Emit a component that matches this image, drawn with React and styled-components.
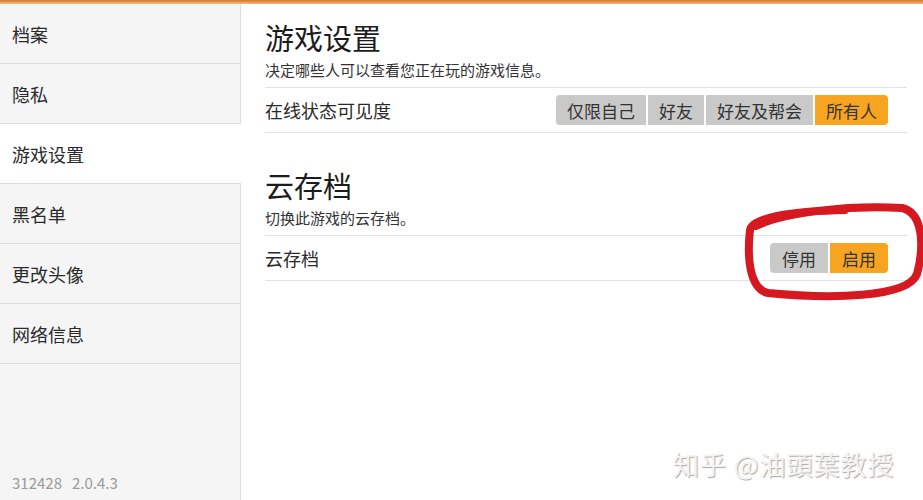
import React from "react";
import styled, { createGlobalStyle } from "styled-components";

const Global = createGlobalStyle`
  html, body { margin: 0; padding: 0; background: #fff; }
  body {
    font-family: "Noto Sans CJK SC", "Noto Sans", sans-serif;
    color: #222;
  }
  #root { height: 500px; }
`;

const Page = styled.div`
  position: relative;
  width: 923px;
  height: 500px;
  display: flex;
  flex-direction: column;
  overflow: hidden;
`;

const TopBar = styled.div`
  height: 4px;
  flex: none;
  background: linear-gradient(#d47a30 0, #e6964d 2px, #f3bf86 4px);
`;

const Body = styled.div`
  flex: 1;
  display: flex;
  min-height: 0;
`;

const Sidebar = styled.nav`
  width: 240px;
  flex: none;
  background: #f5f5f5;
  border-right: 1px solid #dedede;
  display: flex;
  flex-direction: column;
`;

const NavItem = styled.div`
  height: 59px;
  display: flex;
  align-items: center;
  padding-left: 12px;
  font-size: 18px;
  color: #2a2a2a;
  border-bottom: 1px solid #dcdcdc;
  background: ${(p) => (p.$active ? "#fff" : "#f5f5f5")};
  margin-right: ${(p) => (p.$active ? "-1px" : "0")};
`;

const Version = styled.div`
  margin-top: auto;
  padding: 0 0 7px 12px;
  font-size: 15px;
  color: #9a9a9a;
  white-space: pre;
`;

const Main = styled.main`
  flex: 1;
  padding: 0 16px 0 24px;
`;

const Title = styled.h2`
  margin: ${(p) => p.$top}px 0 0;
  font-size: 29px;
  font-weight: 400;
  line-height: 36px;
  color: #1c1c1c;
`;

const Subtitle = styled.p`
  margin: 5px 0 7px;
  font-size: 15px;
  line-height: 20px;
  color: #333;
`;

const Row = styled.div`
  height: 44px;
  display: flex;
  align-items: center;
  justify-content: space-between;
  padding-right: 19px;
  border-top: 1px solid #e2e2e2;
  border-bottom: 1px solid #e2e2e2;
`;

const RowLabel = styled.span`
  font-size: 18px;
  color: #2a2a2a;
`;

const Segmented = styled.div`
  display: flex;
  gap: 2px;
  height: 30px;
`;

const Segment = styled.button`
  border: 0;
  margin: 0;
  font: inherit;
  font-size: 17px;
  height: 30px;
  padding: 0 ${(p) => p.$pad}px;
  color: #333;
  background: ${(p) => (p.$on ? "#f7a521" : "#c9c9c9")};
  &:first-child { border-radius: 4px 0 0 4px; }
  &:last-child { border-radius: 0 4px 4px 0; }
`;

const Watermark = styled.div`
  position: absolute;
  left: 673px;
  top: 445px;
  font-size: 26px;
  letter-spacing: 1px;
  color: #f4f4f4;
  text-shadow: 1px 1px 1px #a9a9a9;
  white-space: pre;
`;

const Scribble = styled.svg`
  position: absolute;
  left: 0;
  top: 0;
  pointer-events: none;
`;

const navItems = ["档案", "隐私", "游戏设置", "黑名单", "更改头像", "网络信息"];

const visibility = [
  { label: "仅限自己", on: false },
  { label: "好友", on: false },
  { label: "好友及帮会", on: false },
  { label: "所有人", on: true },
];

const cloud = [
  { label: "停用", on: false },
  { label: "启用", on: true },
];

export default function App() {
  return (
    <Page>
      <Global />
      <TopBar />
      <Body>
        <Sidebar>
          {navItems.map((n) => (
            <NavItem key={n} $active={n === "游戏设置"}>
              {n}
            </NavItem>
          ))}
          <Version>{"312428   2.0.4.3"}</Version>
        </Sidebar>
        <Main>
          <Title $top={15}>游戏设置</Title>
          <Subtitle>决定哪些人可以查看您正在玩的游戏信息。</Subtitle>
          <Row>
            <RowLabel>在线状态可见度</RowLabel>
            <Segmented>
              {visibility.map((s) => (
                <Segment key={s.label} $on={s.on} $pad={11}>
                  {s.label}
                </Segment>
              ))}
            </Segmented>
          </Row>

          <Title $top={34}>云存档</Title>
          <Subtitle>切换此游戏的云存档。</Subtitle>
          <Row>
            <RowLabel>云存档</RowLabel>
            <Segmented>
              {cloud.map((s) => (
                <Segment key={s.label} $on={s.on} $pad={12}>
                  {s.label}
                </Segment>
              ))}
            </Segmented>
          </Row>
        </Main>
      </Body>

      {/* hand-drawn marker loop around the cloud-save toggle */}
      <Scribble width="923" height="500" viewBox="0 0 923 500">
        <path
          d="M 756 226 C 785 212, 850 205, 902 208 C 924 213, 924 248, 917 274 C 908 298, 830 299, 768 293 C 749 289, 747 256, 750 230 C 752 216, 800 211, 845 210"
          fill="none"
          stroke="#d61820"
          strokeWidth="8"
          strokeLinecap="round"
          strokeLinejoin="round"
        />
      </Scribble>
      <Watermark>{"知乎 @油頭葉教授"}</Watermark>
    </Page>
  );
}
